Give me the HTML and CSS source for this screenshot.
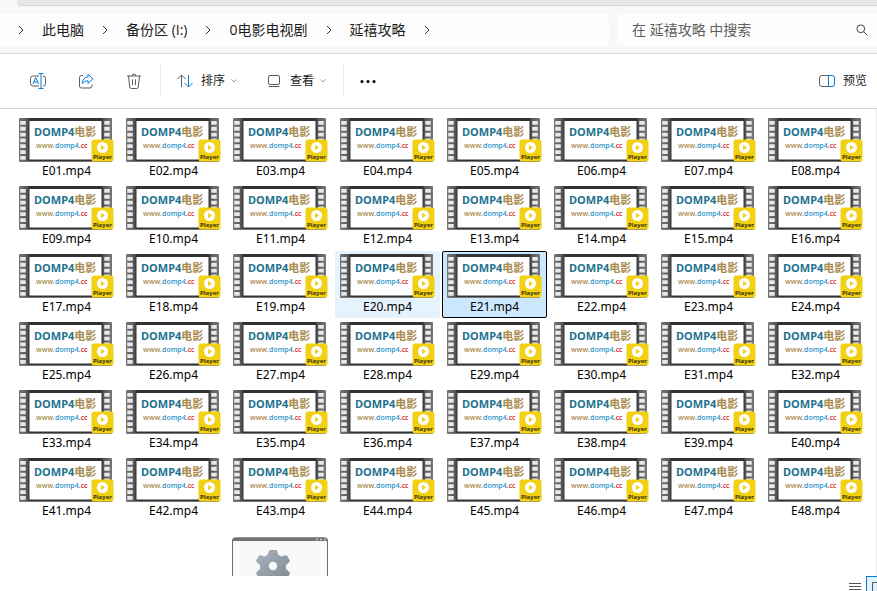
FILE: index.html
```html
<!DOCTYPE html>
<html lang="zh-CN">
<head>
<meta charset="utf-8">
<title>延禧攻略</title>
<link rel="stylesheet" href="styles.css">
</head>
<body>
<div class="tabstrip"></div>
<header class="navbar">
  <nav class="crumbs">
    <svg class="sep" viewBox="0 0 8 10"><path d="M2 1l4 4-4 4"/></svg>
    <a href="#">此电脑</a>
    <svg class="sep" viewBox="0 0 8 10"><path d="M2 1l4 4-4 4"/></svg>
    <a href="#">备份区 (I:)</a>
    <svg class="sep" viewBox="0 0 8 10"><path d="M2 1l4 4-4 4"/></svg>
    <a href="#">0电影电视剧</a>
    <svg class="sep" viewBox="0 0 8 10"><path d="M2 1l4 4-4 4"/></svg>
    <a href="#">延禧攻略</a>
    <svg class="sep" viewBox="0 0 8 10"><path d="M2 1l4 4-4 4"/></svg>
  </nav>
  <label class="search">
    <input type="text" placeholder="在 延禧攻略 中搜索" aria-label="搜索">
    <svg class="lens" viewBox="0 0 12 12"><circle cx="4.8" cy="4.8" r="3.9"/><path d="M7.7 7.7l3.6 3.6"/></svg>
  </label>
</header>
<div class="toolbar">
  <div class="icon-group">
    <button class="icon-btn" aria-label="重命名">
      <svg class="icon" viewBox="0 0 16 16">
        <path class="grey" d="M9 3H3a2.5 2.5 0 0 0-2.5 2.5v5A2.5 2.5 0 0 0 3 13h6M13 3a2.5 2.5 0 0 1 2.5 2.5v5A2.5 2.5 0 0 1 13 13"/>
        <path class="blue" d="M3 11l2.6-6.5h.3L8.500 11M4 9h3.500M8.500.5h5M8.500 15.500h5M11 .5v15"/>
      </svg>
    </button>
    <button class="icon-btn" aria-label="共享">
      <svg class="icon" viewBox="0 0 16 16">
        <path class="grey" d="M5 2.500H3.500a2 2 0 0 0-2 2v8.500a2 2 0 0 0 2 2H12a2 2 0 0 0 2-2v-1.500"/>
        <path class="blue" d="M10 1.300l5 4.500-5 4.500V7.800C7.500 7.700 5.800 8.500 4.300 10.500 4.500 6.500 6.500 4.200 10 3.900z"/>
      </svg>
    </button>
    <button class="icon-btn" aria-label="删除">
      <svg class="icon" viewBox="0 0 16 16">
        <path class="grey" d="M1 3h14M6 3a2 2 0 0 1 4 0M2.500 3l1.200 11a1.600 1.600 0 0 0 1.600 1.500h5.400a1.600 1.600 0 0 0 1.600-1.500l1.200-11M6.500 6.300v5.700M9.500 6.300v5.700"/>
      </svg>
    </button>
  </div>
  <span class="divider"></span>
  <div class="menu-group">
    <button class="menu-btn">
      <svg class="icon" viewBox="0 0 16 16">
        <path class="grey" d="M4.500 14V2M.5 6l4-4 4 4"/>
        <path class="blue" d="M11.500 2v12M7.500 10l4 4 4-4"/>
      </svg>
      <span>排序</span>
      <svg class="caret" viewBox="0 0 6 4"><path d="M.5.5L3 3 5.500.5"/></svg>
    </button>
    <button class="menu-btn">
      <svg class="icon" viewBox="0 0 16 16">
        <rect class="grey" x="2.500" y="2.500" width="11" height="9" rx="1.500"/>
        <path class="grey" d="M2.500 13.500h11"/>
      </svg>
      <span>查看</span>
      <svg class="caret" viewBox="0 0 6 4"><path d="M.5.5L3 3 5.500.5"/></svg>
    </button>
  </div>
  <span class="divider"></span>
  <button class="more-btn" aria-label="更多">
    <svg class="icon" viewBox="0 0 16 16"><circle cx="2" cy="8.500" r="1.500"/><circle cx="8" cy="8.500" r="1.500"/><circle cx="14" cy="8.500" r="1.500"/></svg>
  </button>
  <button class="menu-btn preview">
    <svg class="icon" viewBox="0 0 16 16">
      <path class="grey" d="M9.500 2.500H3a2.500 2.500 0 0 0-2.500 2.500v6A2.500 2.500 0 0 0 3 13.500h6.500"/>
      <path class="blue" d="M9.500 2.500H13a2.500 2.500 0 0 1 2.500 2.500v6a2.500 2.500 0 0 1-2.500 2.500H9.500z"/>
    </svg>
    <span>预览</span>
  </button>
</div>
<main class="content">
  <ul class="files" role="listbox" aria-label="文件">
    <li class="app">
      <svg viewBox="0 0 96 68">
        <path d="M.5 68V4a3 3 0 0 1 3-3h89a3 3 0 0 1 3 3v64z" fill="#f9f9f9" stroke="#737170"/>
        <path d="M0 4a3.500 3.500 0 0 1 3.500-3.500h89A3.500 3.500 0 0 1 96 4z" fill="#737170"/>
        <path d="M84 2.500h2M88 2.500h2M92 2.500h2" stroke="#c9c9c9" stroke-width="1.500"/>
        <path fill="url(#steel)" d="M36.800 14.200Q37 13 38.500 13h5q1.500 0 1.700 1.200l1.100 3.600 3 1.700 4.200-1.300q1.200-.2 1.900 1l2.200 3.800q.7 1.200-.4 2.100L53.900 28.300v3.400l3.300 3.200q1.100.9.400 2.100l-2.200 3.800q-.7 1.200-1.900 1l-4.200-1.300-3 1.700-1.100 4.600q-.2.7-1.700.7h-5q-1.500 0-1.700-.7l-1.100-4.600-3-1.700-4.200 1.300q-1.200.2-1.900-1L24.400 37q-.7-1.200.4-2.100l3.300-3.200v-3.400l-3.300-3.200q-1.100-.9-.4-2.100l2.200-3.800q.7-1.200 1.900-1l4.200 1.300 3-1.700z"/>
        <circle cx="41" cy="29" r="4.200" fill="#f9f9f9"/>
      </svg>
    </li>
  </ul>
</main>
<footer class="status">
  <button class="view-btn" aria-label="详细信息"><svg viewBox="0 0 12 9"><path d="M0 1.500h12M0 4.500h12M0 7.500h12"/></svg></button>
  <button class="view-btn current" aria-label="大图标"><svg viewBox="0 0 12 9"><path d="M.5 9V.5h11V9"/></svg></button>
</footer>

<svg class="defs" aria-hidden="true">
  <defs>
    <linearGradient id="reel" x1="0" x2="1" y1="0" y2="0">
      <stop offset="0" stop-color="#777"/><stop offset=".09" stop-color="#555"/><stop offset=".11" stop-color="#333"/><stop offset=".89" stop-color="#333"/><stop offset=".91" stop-color="#555"/><stop offset="1" stop-color="#777"/>
    </linearGradient>
    <linearGradient id="steel" x1="0" x2="1" y1="0" y2="1">
      <stop offset="0" stop-color="#a9b4be"/><stop offset="1" stop-color="#7d8791"/>
    </linearGradient>
  </defs>
</svg>

<template id="file">
  <li class="file" role="option">
    <svg class="thumb" viewBox="0 0 95 44">
      <rect width="93" height="44" rx="1" fill="url(#reel)"/>
      <path d="M4 3v39M88 3v39" stroke="#e9e9e9" stroke-width="5.500" stroke-dasharray="3.800 2.030"/>
      <rect x="10.500" y="3" width="72" height="38.500" fill="#fff"/>
      <path d="M1 43.500h91" stroke="#777"/>
      <text class="brand" x="15" y="18"><tspan fill="#23728f">DOMP4</tspan><tspan class="cjk" fill="#a98b4d">电影</tspan></text>
      <text class="url" x="17" y="30"><tspan fill="#a98b4d">www.</tspan><tspan fill="#2a93cc">domp4</tspan><tspan fill="#d8232a">.cc</tspan></text>
      <rect x="72.500" y="21.500" width="22" height="22" rx="2.500" fill="#f2d013"/>
      <circle cx="83.500" cy="29.500" r="5.500" fill="#fff"/>
      <path d="M82 26.800v5.400l4-2.700z" fill="#f2d013"/>
      <text class="player" x="83.500" y="41">Player</text>
    </svg>
    <span class="name"></span>
  </li>
</template>
<script src="files.js"></script>
</body>
</html>
```
FILE: styles.css
```css
* { box-sizing: border-box; }

body {
  margin: 0;
  height: 100vh;
  display: flex;
  flex-direction: column;
  overflow: hidden;
  background: #fff;
  color: #1b1b1b;
  font: 12px/16px "Noto Sans", "Noto Sans CJK SC", sans-serif;
}

button {
  border: 0;
  padding: 0;
  background: none;
  color: inherit;
  font: inherit;
}

svg { display: block; flex: none; }
.defs { position: absolute; width: 0; height: 0; }

.tabstrip {
  flex: none;
  height: 6px;
  margin-left: 17px;
  background: #e7e7e7;
  border-bottom: 1px solid #d6d6d6;
  border-bottom-left-radius: 4px;
  box-shadow: -17px 0 0 #f8f8f8;
}

.navbar {
  flex: none;
  display: flex;
  gap: 8px;
  padding: 8px 0 7px;
  background: #f8f8f8;
  border-bottom: 1px solid #dadada;
  font-family: "Open Sans", "Noto Sans CJK SC", sans-serif;
  font-size: 14px;
}

.crumbs {
  flex: 1;
  display: flex;
  align-items: center;
  gap: 17px;
  height: 32px;
  padding-left: 17px;
  background: #fdfdfd;
  border-radius: 0 4px 4px 0;
  white-space: nowrap;
}
.crumbs a { color: #1b1b1b; text-decoration: none; }
.sep { width: 8px; height: 10px; fill: none; stroke: #333; }

.search {
  flex: none;
  display: flex;
  align-items: center;
  width: 260px;
  padding: 0 9px 0 15px;
  background: #fdfdfd;
  border-radius: 4px 0 0 4px;
}
.search input {
  flex: 1;
  min-width: 0;
  padding: 0;
  border: 0;
  outline: 0;
  background: none;
  font: inherit;
}
.search input::placeholder { color: #5d5d5d; opacity: 1; }
.lens { width: 12px; height: 12px; fill: none; stroke: #444; }

.toolbar {
  flex: none;
  display: flex;
  align-items: center;
  height: 55px;
  padding-left: 14px;
  border-bottom: 1px solid #d4d4d4;
}
.icon-group, .menu-group { display: flex; }
.icon-group { padding-right: 2px; }
.menu-group { padding-right: 4px; }
.icon { width: 16px; height: 16px; }
.icon .grey { fill: none; stroke: #5c5c5c; }
.icon .blue { fill: none; stroke: #0a7bd6; }
.icon-btn { display: grid; place-items: center; width: 48px; height: 32px; }
.menu-btn {
  display: flex;
  align-items: center;
  gap: 8px;
  height: 32px;
  padding: 0 13px 0 16px;
}
.caret { width: 6px; height: 4px; margin-left: -2px; fill: none; stroke: #999; }
.divider { width: 1px; height: 32px; background: #e8e8e8; }
.more-btn { padding: 0 16px; }
.preview { margin-left: auto; padding: 0 10px; }

.content {
  flex: 1;
  min-height: 0;
  overflow: hidden;
  padding: 6px 0 0 14px;
  border-right: 1px solid #ececec;
}
.files {
  display: grid;
  grid-template-columns: repeat(auto-fill, 105px);
  grid-auto-rows: 67px;
  gap: 1px 2px;
  margin: 0;
  padding: 0;
  list-style: none;
}
.file {
  display: flex;
  flex-direction: column;
  gap: 1px;
  padding: 2px 4px;
  border: 1px solid transparent;
  border-radius: 2px;
  color: #000;
}
.file.hovered { background: #e5f3ff; }
.file.selected { background: #cce8ff; border-color: #000; }
.thumb { width: 95px; height: 44px; }
.name { text-align: center; }

.brand { font: bold 11px "Noto Sans", sans-serif; }
.brand .cjk { font-family: "Noto Sans CJK SC", sans-serif; }
.url { font: 600 7px "Open Sans", sans-serif; }
.player { font: bold 6px "Noto Sans", sans-serif; fill: #3a3206; text-anchor: middle; }

.app { grid-column: 3; padding: 14px 4px 0; }
.app svg { width: 96px; height: 68px; }

.status {
  flex: none;
  display: flex;
  justify-content: flex-end;
  align-items: flex-start;
  height: 15px;
  overflow: hidden;
}
.view-btn { width: 22px; height: 20px; padding: 5px; flex: none; }
.view-btn svg { width: 12px; height: 9px; fill: none; stroke: #555; }
.view-btn.current {
  margin-right: -11px;
  border: 1px solid #0078d7;
  background: #e0f2fb;
}
```
FILE: files.js
```js
const list = document.querySelector('.files');
const app = list.querySelector('.app');
const template = document.getElementById('file');

for (let n = 1; n <= 48; n++) {
  const item = template.content.cloneNode(true).querySelector('li');
  item.querySelector('.name').textContent = `E${String(n).padStart(2, '0')}.mp4`;
  if (n === 20) item.classList.add('hovered');
  if (n === 21) {
    item.classList.add('selected');
    item.setAttribute('aria-selected', 'true');
  }
  list.insertBefore(item, app);
}
```
